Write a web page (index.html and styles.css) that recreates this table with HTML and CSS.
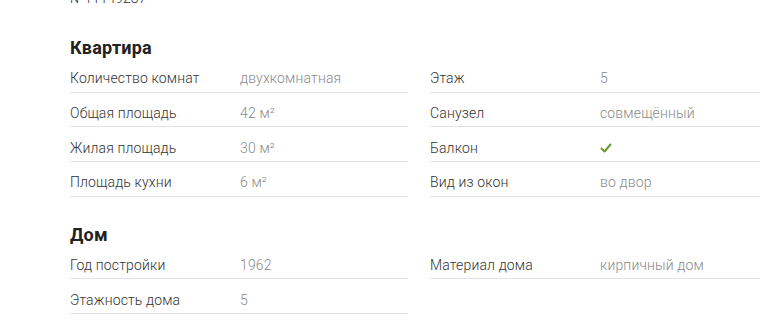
FILE: index.html
```html
<!DOCTYPE html>
<html lang="ru">
<head>
<meta charset="utf-8">
<link rel="stylesheet" href="styles.css">
</head>
<body>
<div class="page">
  <div class="num">№11149287</div>

  <h2 class="title">Квартира</h2>
  <div class="grid">
    <div class="row"><span class="lbl">Количество комнат</span><span class="val">двухкомнатная</span></div>
    <div class="row"><span class="lbl">Этаж</span><span class="val">5</span></div>
    <div class="row"><span class="lbl">Общая площадь</span><span class="val">42 м²</span></div>
    <div class="row"><span class="lbl">Санузел</span><span class="val">совмещённый</span></div>
    <div class="row"><span class="lbl">Жилая площадь</span><span class="val">30 м²</span></div>
    <div class="row"><span class="lbl">Балкон</span><span class="val"><svg class="check" width="12" height="10" viewBox="0 0 12 10"><path d="M1.5 5.5 L4.5 8.5 L10.5 1.5" fill="none" stroke="#6b9a2c" stroke-width="2" stroke-linecap="round" stroke-linejoin="round"/></svg></span></div>
    <div class="row"><span class="lbl">Площадь кухни</span><span class="val">6 м²</span></div>
    <div class="row"><span class="lbl">Вид из окон</span><span class="val">во двор</span></div>
  </div>

  <h2 class="title second">Дом</h2>
  <div class="grid">
    <div class="row"><span class="lbl">Год постройки</span><span class="val">1962</span></div>
    <div class="row"><span class="lbl">Материал дома</span><span class="val">кирпичный дом</span></div>
    <div class="row"><span class="lbl">Этажность дома</span><span class="val">5</span></div>
  </div>
</div>
</body>
</html>
```
FILE: styles.css
```css
html, body {
  margin: 0;
  padding: 0;
  background: #fff;
  overflow: hidden;
}
body {
  font-family: Roboto, "Liberation Sans", sans-serif;
  color: #444;
}
.page {
  padding-left: 70px;
  width: 760px;
  box-sizing: border-box;
}
.num {
  font-size: 14px;
  line-height: 16px;
  margin-top: -10px;
  font-weight: 300;
  color: #333;
}
.title {
  margin: 32px 0 0;
  font-size: 18px;
  line-height: 20px;
  font-weight: 700;
  letter-spacing: 0.2px;
  color: #222;
  height: 20px;
}
.title.second {
  margin-top: 28px;
}
.grid {
  display: grid;
  grid-template-columns: 338px 338px;
  column-gap: 22px;
}
.row {
  display: flex;
  align-items: center;
  height: 34.67px;
  padding-top: 8px;
  box-sizing: border-box;
  border-bottom: 1px solid #e3e3e3;
  font-size: 14px;
  line-height: 17px;
  font-weight: 300;
  letter-spacing: 0.15px;
}
.lbl {
  width: 170px;
  flex: none;
  color: #333;
}
.val {
  color: #8a8a8a;
}
.check {
  display: block;
  margin-left: 0;
}
```
